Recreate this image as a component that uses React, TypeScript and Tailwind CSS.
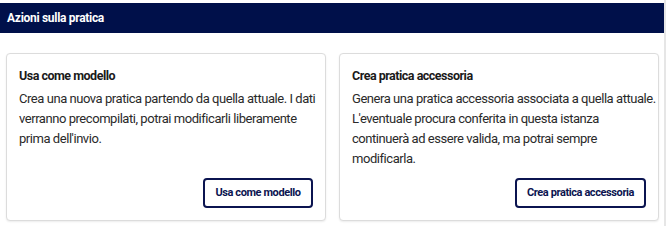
import React from "react";

type Action = {
  title: string;
  lines: string[];
  button: string;
  buttonWidth: string;
};

const actions: Action[] = [
  {
    title: "Usa come modello",
    lines: [
      "Crea una nuova pratica partendo da quella attuale. I dati",
      "verranno precompilati, potrai modificarli liberamente",
      "prima dell'invio.",
    ],
    button: "Usa come modello",
    buttonWidth: "w-[110px]",
  },
  {
    title: "Crea pratica accessoria",
    lines: [
      "Genera una pratica accessoria associata a quella attuale.",
      "L'eventuale procura conferita in questa istanza",
      "continuerà ad essere valida, ma potrai sempre",
      "modificarla.",
    ],
    button: "Crea pratica accessoria",
    buttonWidth: "w-[131px]",
  },
];

const ActionCard: React.FC<{ action: Action }> = ({ action }) => (
  <div className="flex h-[168px] w-[320px] flex-col rounded-[4px] border border-[#dcdcdc] bg-white p-3 shadow-[0_1px_2px_rgba(0,0,0,0.08)]">
    <h4 className="text-[12.5px] font-bold leading-[20px] tracking-[-0.5px] text-[#1a1a1a]">
      {action.title}
    </h4>
    <p className="mt-[3px] whitespace-nowrap text-[13px] leading-[20px] tracking-[-0.45px] text-[#2a2a2a]">
      {action.lines.map((l, i) => (
        <React.Fragment key={i}>
          {l}
          {i < action.lines.length - 1 && <br />}
        </React.Fragment>
      ))}
    </p>
    <div className="mt-auto flex justify-end">
      <button
        className={`${action.buttonWidth} h-[30px] rounded-[4px] border-2 border-[#0b1450] bg-white text-[11px] font-bold tracking-[-0.4px] text-[#0b1450]`}
      >
        {action.button}
      </button>
    </div>
  </div>
);

export default function App() {
  return (
    <div
      className="h-[226px] w-[666px] bg-white"
      style={{ fontFamily: "Roboto, 'Liberation Sans', sans-serif" }}
    >
      <div className="flex h-full">
        <div className="w-[664px] pt-[3px]">
          <div className="flex h-[30px] items-center bg-[#00104a] px-[7px]">
            <span className="text-[12px] font-bold tracking-[-0.3px] text-white">
              Azioni sulla pratica
            </span>
          </div>
          <div className="mt-[20px] flex gap-[13px] pl-[6px]">
            {actions.map((a) => (
              <ActionCard key={a.title} action={a} />
            ))}
          </div>
        </div>
        <div className="w-[2px] bg-[#e6e6e6]" />
      </div>
    </div>
  );
}
